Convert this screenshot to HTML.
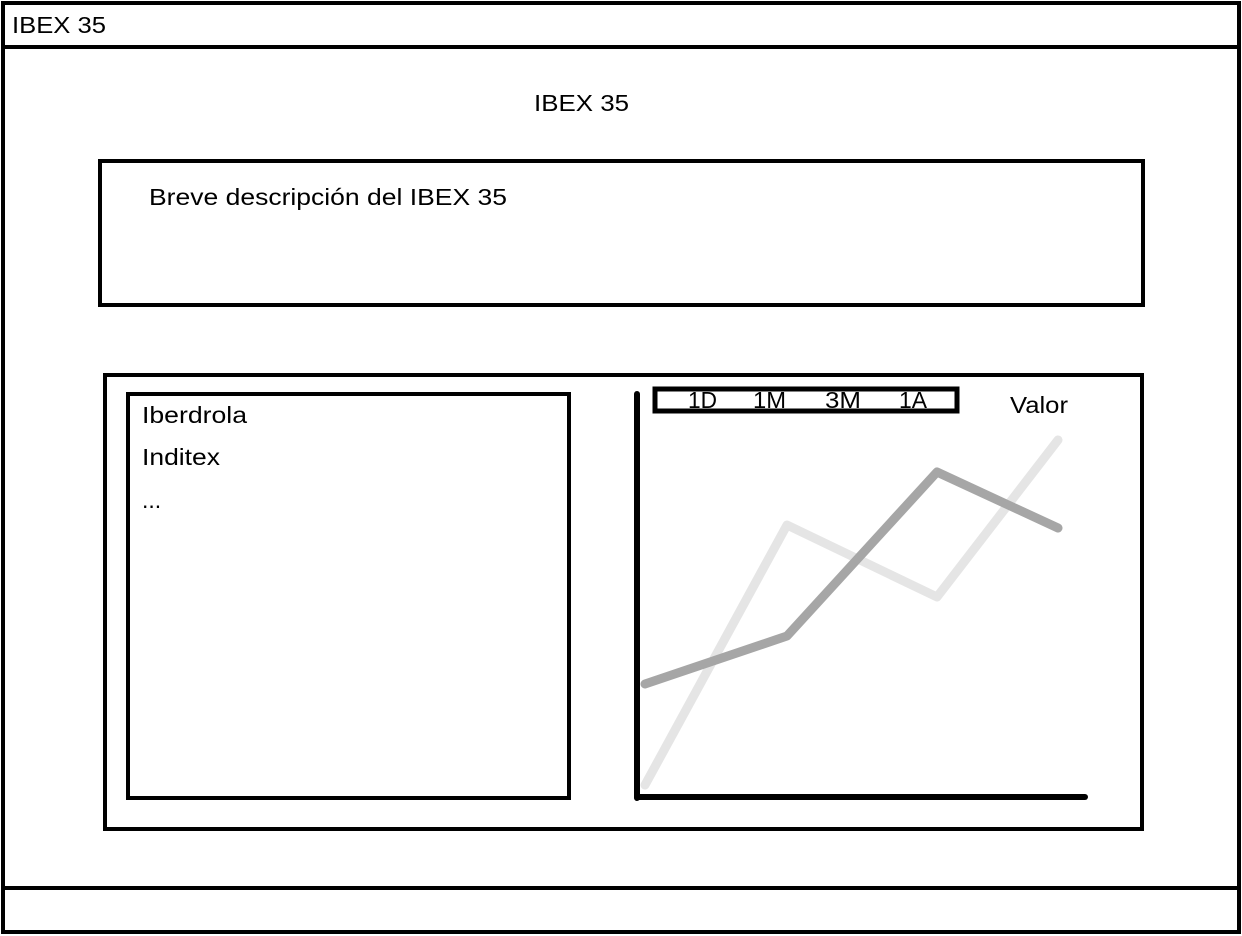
<!DOCTYPE html>
<html><head><meta charset="utf-8"><style>
html,body{margin:0;padding:0;background:#fff;}
svg{display:block;}
text{font-family:"Liberation Sans",sans-serif;fill:#000;}
</style></head><body>
<svg width="1242" height="936" viewBox="0 0 1242 936">
<g fill="none" stroke="#000" stroke-width="4">
<rect x="3" y="3" width="1236" height="929"/>
<line x1="3" y1="47" x2="1239" y2="47"/>
<line x1="3" y1="888" x2="1239" y2="888"/>
<rect x="100" y="161" width="1043" height="144"/>
<rect x="105" y="375" width="1037" height="454"/>
<rect x="128" y="394" width="441" height="404"/>
<rect x="655" y="389" width="302" height="22" stroke-width="5"/>
</g>
<polyline points="645,785 787,525 937,597 1058,440" fill="none" stroke="#e5e5e5" stroke-width="9" stroke-linecap="round" stroke-linejoin="round"/>
<polyline points="645,684 787,636 937,472 1058,528" fill="none" stroke="#a6a6a6" stroke-width="9" stroke-linecap="round" stroke-linejoin="round"/>
<line x1="637" y1="394" x2="637" y2="798" stroke="#000" stroke-width="6" stroke-linecap="round"/>
<line x1="637" y1="797" x2="1085" y2="797" stroke="#000" stroke-width="6" stroke-linecap="round"/>
<g font-size="23" lengthAdjust="spacingAndGlyphs">
<text x="12" y="33" textLength="94" lengthAdjust="spacingAndGlyphs">IBEX 35</text>
<text x="534" y="111" textLength="95" lengthAdjust="spacingAndGlyphs">IBEX 35</text>
<text x="149" y="205" textLength="358" lengthAdjust="spacingAndGlyphs">Breve descripción del IBEX 35</text>
<text x="142" y="423" textLength="105" lengthAdjust="spacingAndGlyphs">Iberdrola</text>
<text x="142" y="465" textLength="78" lengthAdjust="spacingAndGlyphs">Inditex</text>
<text x="142" y="508">...</text>
<text x="688" y="408" textLength="29" lengthAdjust="spacingAndGlyphs">1D</text>
<text x="753" y="408" textLength="33" lengthAdjust="spacingAndGlyphs">1M</text>
<text x="825" y="408" textLength="36" lengthAdjust="spacingAndGlyphs">3M</text>
<text x="899" y="408" textLength="28" lengthAdjust="spacingAndGlyphs">1A</text>
<text x="1010" y="413" textLength="58" lengthAdjust="spacingAndGlyphs">Valor</text>
</g>
</svg>
</body></html>
